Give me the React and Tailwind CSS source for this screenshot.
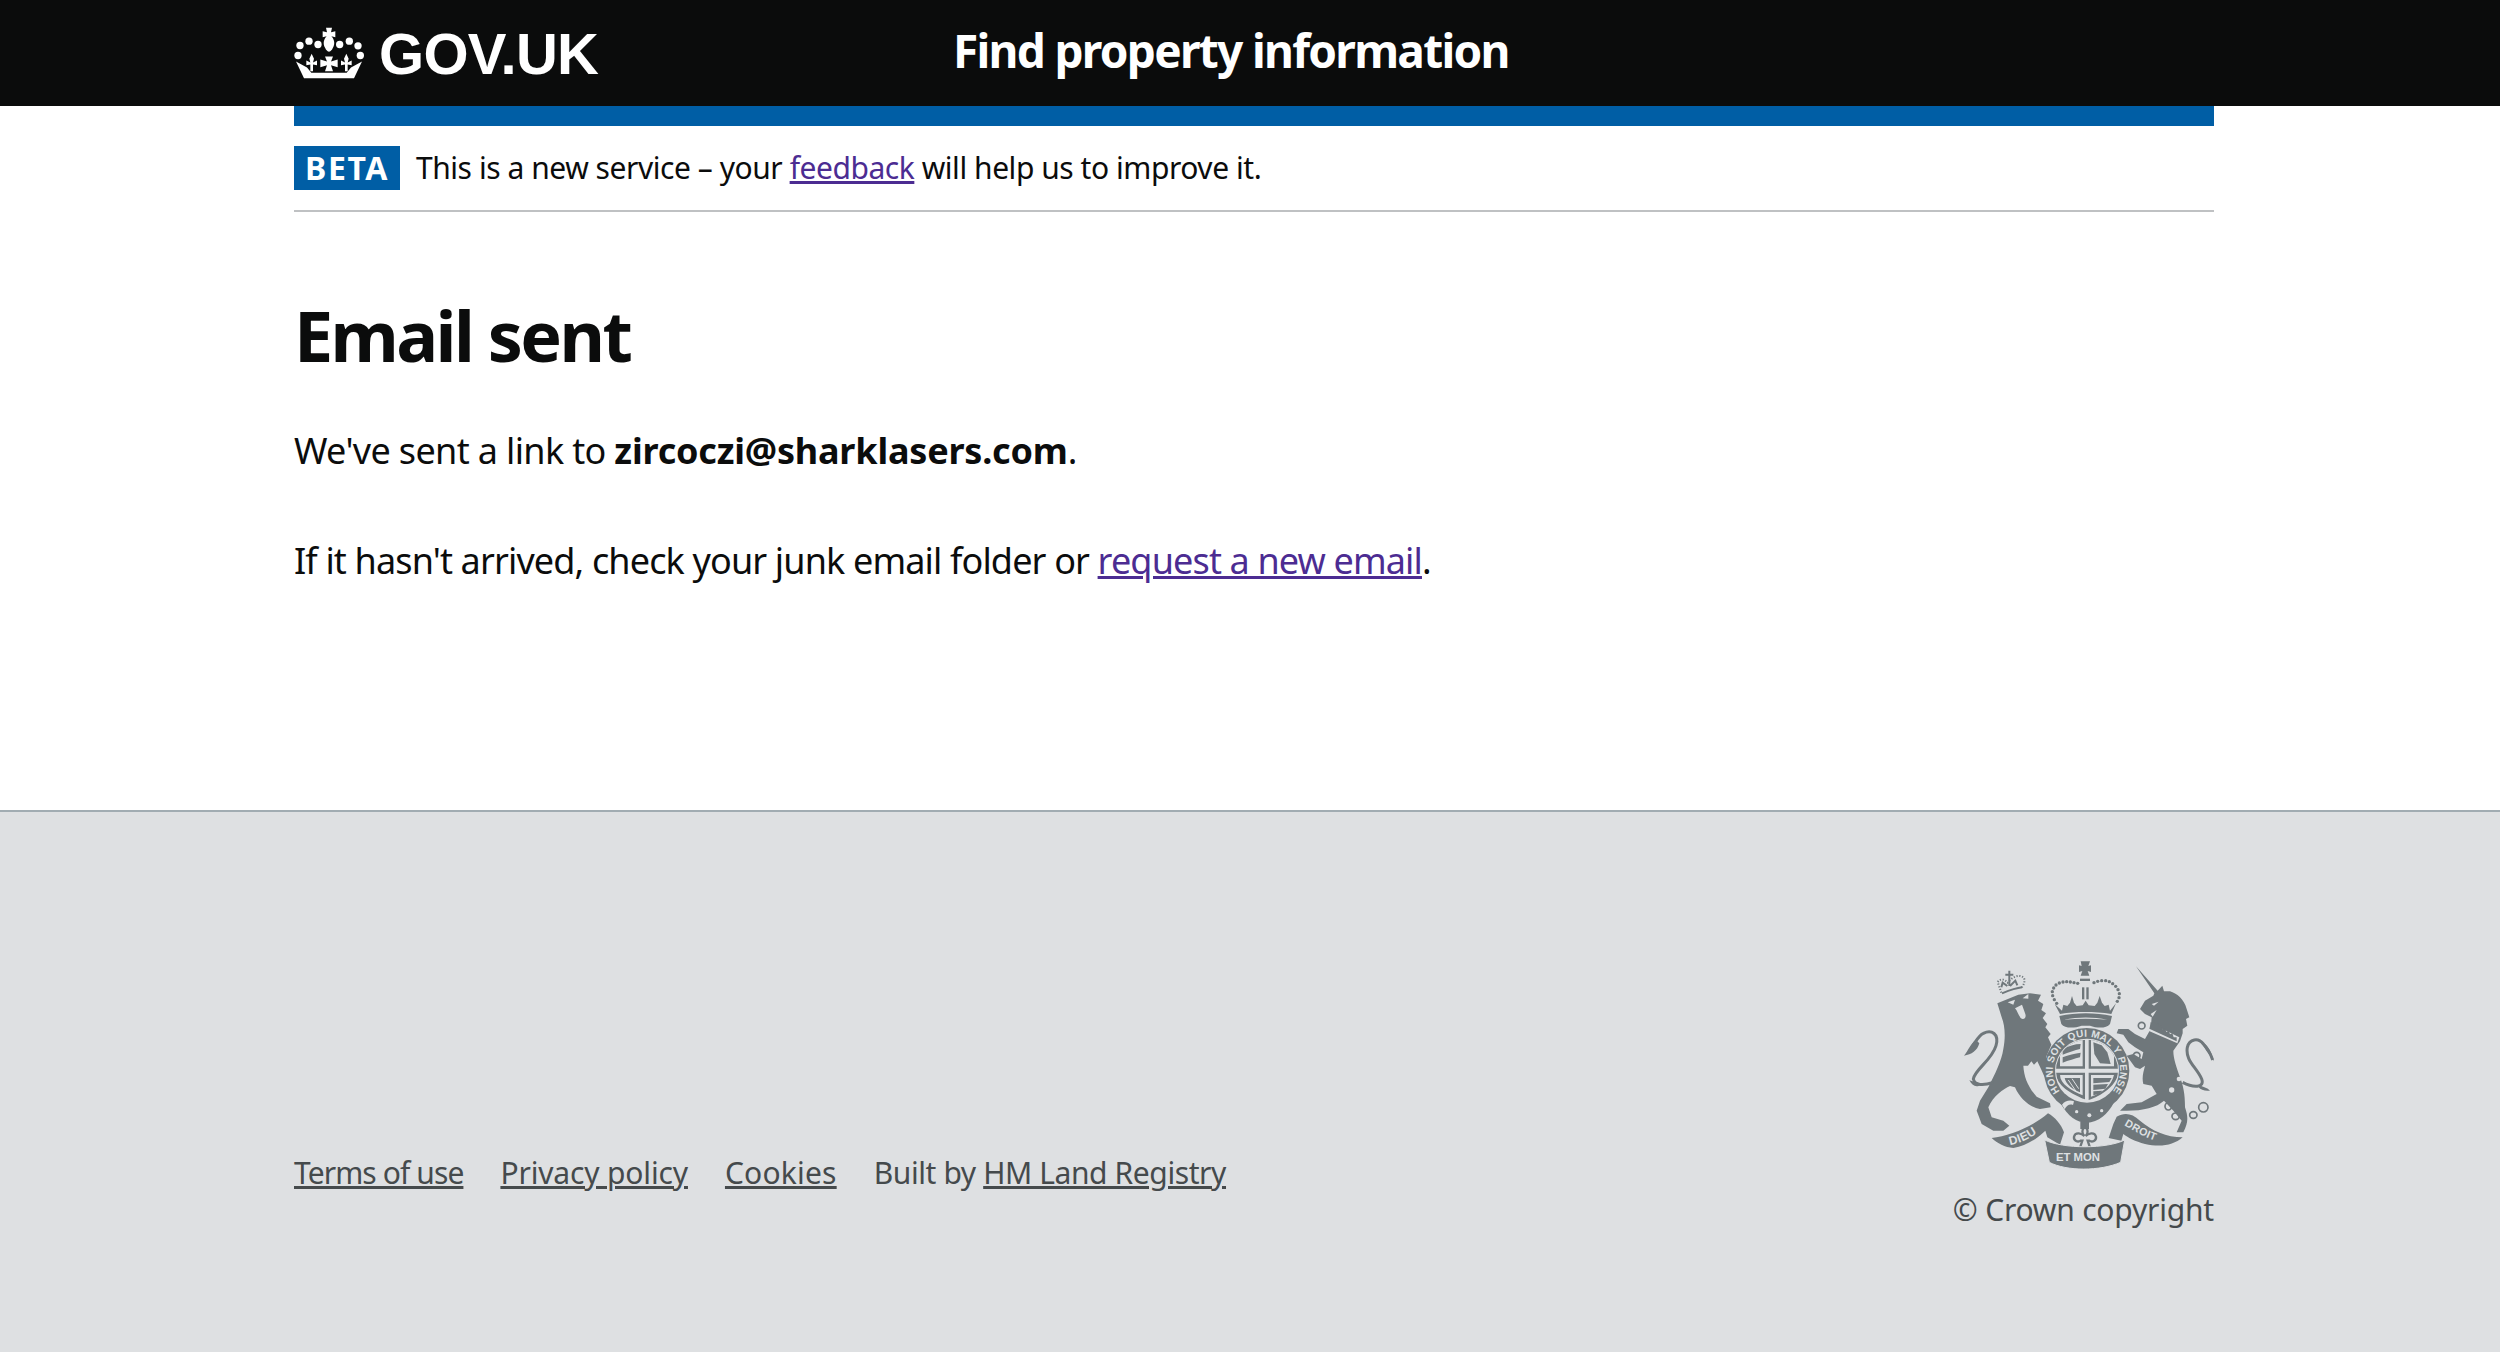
function Crown() {
  return (
    <svg width="70" height="52" viewBox="15 25 210 155" fill="#fff" aria-hidden="true">
      <path d="M111 27h18l-3 13 13-3v18l-12-3c8 8 13 22 4 36-2 5-5 8-11 11-6-3-9-6-11-11-9-14-4-28 4-36l-12 3V37l13 3z" />
      <circle cx="33" cy="80" r="11" /><circle cx="60" cy="67" r="11" /><circle cx="87" cy="77" r="11" />
      <circle cx="152" cy="77" r="11" /><circle cx="181" cy="67" r="11" /><circle cx="207" cy="81" r="11" />
      <circle cx="27" cy="110" r="11" /><circle cx="214" cy="110" r="11" />
      <path d="M45 178H195L219 128L186 146L173 162H67L54 146L21 128Z" />
      <path d="M68 105l7 15-3 11 12-6v14l-12-2v20h-8v-20l-12 2v-14l12 6-3-11z" />
      <path d="M172 105l7 15-3 11 12-6v14l-12-2v20h-8v-20l-12 2v-14l12 6-3-11z" />
      <path d="M108 113h24l-6 15 20-6v23l-20-6 6 18h-24l6-18-20 6v-23l20 6z" />
    </svg>
  );
}
function Crest() {
  const c = "#6f777b", bg = "#dee0e2";
  return (
    <svg width="254" height="215" viewBox="0 0 762 645" aria-hidden="true">
      <defs>
        <clipPath id="inner"><circle cx="381" cy="350" r="93" /></clipPath>
        <path id="garter" d="M300 412A101 101 0 1 1 458 412" />
        <path id="dieu" d="M150 573C195 565 235 540 262 510" />
        <path id="droit" d="M492 514C520 530 560 555 612 568" />
      </defs>
      <g fill={c}>
        {/* lion */}
        <path d="M112 148L175 122L210 118L243 122L234 140L250 150L244 168L258 178L248 192L262 210L256 220L272 240L264 250L274 272L258 310L266 340L288 372L276 388L255 372L243 345L232 322L222 332L214 322L204 335L190 335C192 370 205 400 230 428L270 448L272 460L240 465C210 460 180 435 165 400L150 396C130 405 100 425 85 460L95 490L130 500L148 515L130 530L100 530L65 510L50 470L60 440L85 400C105 360 125 320 130 285C137 250 135 215 125 190Z" />
        <path d="M100 385C70 395 45 395 40 375C45 345 95 320 108 275C118 240 95 225 70 238C55 245 48 262 35 280" fill="none" stroke={c} strokeWidth="9" />
        <path d="M12 305C25 290 30 270 48 258L58 268C52 290 35 302 12 305ZM28 378C40 385 55 382 62 392C50 402 35 395 28 378Z" />
        <path d="M143 145L165 137L160 152ZM188 133L205 120L205 134ZM165 163L186 152L196 180C200 192 190 200 182 192C174 182 172 170 165 163Z" fill={bg} />
        {/* lion crown */}
        <g fill="none" stroke={c} strokeWidth="4">
          <path d="M124 116L113 84C122 72 134 76 143 86C152 74 176 56 192 72C196 84 190 96 182 104" strokeDasharray="3.5 5" strokeWidth="6" />
          <path d="M126 118C146 110 168 102 186 100" strokeWidth="6" />
          <path d="M148 50V96M136 62H160M124 100L128 86L142 96M150 96L166 80L172 94" strokeWidth="6" />
        </g>
        {/* central crown */}
        <path d="M362 22h28l-5 14 8-2v20l-10-3 5 14h-26l5-14-10 3V34l8 2z" />
        <rect x="360" y="74" width="30" height="7" />
        <rect x="366" y="100" width="7" height="36" /><rect x="379" y="100" width="7" height="36" />
        <path d="M284 150L306 170L310 152L322 156L330 146L336 126L342 146L350 156L368 154L377 140L386 154L404 156L412 146L419 126L426 146L434 156L446 152L450 170L468 148L454 180C400 172 350 172 300 180Z" />
        <path d="M298 186C350 175 405 175 456 186L450 210C438 225 410 222 390 215L365 215C345 222 315 225 304 210Z" />
        <path d="M312 197C355 188 400 188 442 197C400 193 355 193 312 197Z" fill={bg} />
        {[[278,125],[277,113],[281,102],[288,93],[298,87],[309,84],[320,83],[331,84],[342,86],[353,88],[402,86],[413,82],[425,80],[437,80],[448,83],[458,89],[467,97],[474,107],[478,119],[477,131],[472,142],[283,137],[290,148]].map(([x, y], i) => <circle key={i} cx={x} cy={y} r="5" />)}
        {/* garter */}
        <circle cx="380" cy="350" r="128" />
        <path d="M300 445C325 490 350 505 380 507C415 505 445 480 462 445L440 420L320 420Z" />
        <circle cx="381" cy="350" r="96" fill={bg} />
        <g clipPath="url(#inner)">
          <path d="M288 250H375V344H288ZM386 250H475V344H386ZM288 356H375V436C335 420 288 395 288 356ZM386 356H475C470 395 425 425 386 438Z" />
          <path d="M300 256H368V337H300ZM393 256H462V337H393ZM300 363H368V424C335 410 300 390 300 363ZM393 363H462C455 395 425 418 393 428Z" fill={bg} />
          <path d="M308 285C325 276 345 270 362 270L360 285C345 288 325 296 308 302ZM308 310C325 303 345 298 362 296L360 310C345 314 325 320 308 326ZM400 265L425 274L442 295L452 330L420 328L403 300ZM400 372H455L448 384L400 388ZM400 392L444 390L436 404L400 408ZM400 412L428 410L416 420L400 424ZM314 372H360V415C340 408 318 392 314 372Z" />
          <path d="M325 378L348 412M336 374L356 404" stroke={bg} strokeWidth="3" fill="none" />
        </g>
        <g fill={bg}>
          <circle cx="350" cy="473" r="5" /><circle cx="388" cy="484" r="6" /><circle cx="425" cy="470" r="5" />
          <path d="M306 452C315 440 330 437 342 442L339 453C328 449 320 455 314 466Z" />
        </g>
        {/* fleur */}
        <rect x="361" y="503" width="26" height="22" />
        <path d="M375 518C386 528 384 540 377 546C384 538 404 532 408 548C410 560 396 566 388 560L383 560L389 578L375 586L361 578L367 560L362 560C354 566 340 560 342 548C346 532 366 538 373 546C366 540 364 528 375 518Z" fill="none" stroke={c} strokeWidth="7" />
        {/* ribbon */}
        <path d="M95 552C150 548 230 510 264 478C285 490 303 510 312 535L300 572L262 550L256 530C225 560 195 575 160 582C135 580 112 568 95 552Z" />
        <path d="M254 558C310 585 440 585 494 558L482 625C420 652 320 652 268 625Z" stroke={bg} strokeWidth="3" />
        <path d="M460 510L470 488C495 475 515 478 540 500C575 530 620 550 668 550C640 575 600 580 555 570C525 562 505 552 490 540L484 560L446 552Z" />
        {/* unicorn */}
        <path d="M528 37L593 110L607 95L612 112L630 112C650 118 672 135 680 165L688 190L678 195L682 215L668 225L668 238L660 262L640 290C640 315 650 340 660 370C670 395 675 420 675 460C685 490 685 505 670 535L650 535L665 500L640 470L612 440C590 460 550 470 500 470L480 470L500 450L545 445L590 420L575 395L550 390C545 370 550 355 555 335L540 345L525 340L500 305L520 300L545 315L550 295L525 280L505 265L490 242L470 238L475 225L505 225L525 240L555 255L572 225L575 190L555 180L540 165L555 140L580 125L583 118Z" />
        <path d="M572 180L590 168L578 188ZM575 150L596 143L582 155Z" fill={bg} />
        <path d="M566 205L658 250L652 268L560 228Z" fill={bg} />
        <path d="M570 216L572 204L578 208L582 200L587 212L593 206L597 218L604 214L608 226L615 222L619 234L626 230L630 241L637 238L641 250L650 250L650 262L568 224Z" />
        <path d="M668 385C700 402 735 402 725 375C710 340 675 320 682 280C688 255 715 250 730 270C745 285 752 300 758 318" fill="none" stroke={c} strokeWidth="9" />
        <path d="M722 395C732 400 742 400 750 410C735 412 722 408 716 400ZM718 258C738 268 752 285 762 322L740 292Z" />
        <g fill="none" stroke={c} strokeWidth="5">
          <circle cx="545" cy="215" r="10" /><circle cx="530" cy="305" r="10" />
          <ellipse cx="625" cy="457" rx="10" ry="11" /><ellipse cx="647" cy="487" rx="11" ry="10" />
          <ellipse cx="700" cy="483" rx="11" ry="10" /><ellipse cx="730" cy="460" rx="14" ry="14" />
        </g>
        <g fill={bg}><circle cx="665" cy="330" r="10" /><circle cx="657" cy="375" r="7" /><circle cx="635" cy="408" r="8" /></g>
      </g>
      <g fill={bg} fontFamily="'Liberation Sans', sans-serif" fontWeight="700">
        <text fontSize="30"><textPath href="#garter" textLength="452" lengthAdjust="spacing">HONI SOIT QUI MAL Y PENSE</textPath></text>
        <text fontSize="36" letterSpacing="1"><textPath href="#dieu">DIEU</textPath></text>
        <text fontSize="32" letterSpacing="1"><textPath href="#droit">DROIT</textPath></text>
        <text x="288" y="622" fontSize="34">ET MON</text>
      </g>
    </svg>
  );
}
export default function App() {
  return (
    <div className="min-h-screen flex flex-col bg-white text-[#0b0c0c] font-['Noto_Sans',sans-serif]">
      <header className="h-[106px] bg-[#0b0c0c] shrink-0">
        <div className="w-[1920px] ml-[294px] h-full flex items-center">
          <a className="w-[659px] flex items-center gap-[15px] text-white text-[58px] font-bold tracking-[-0.7px] font-['Liberation_Sans',sans-serif]">
            <Crown />GOV.UK
          </a>
          <span className="text-white text-[46px] font-bold tracking-[-1.7px] -mt-[5px]">Find property information</span>
        </div>
      </header>
      <div className="w-[1920px] ml-[294px]">
        <div className="h-5 bg-[#005ea5]" />
        <div className="h-[86px] flex items-center border-b-2 border-[#bfc1c3]">
          <strong className="w-[106px] h-11 bg-[#005ea5] text-white text-[32px] font-bold tracking-[1.6px] flex items-center justify-center">BETA</strong>
          <p className="ml-4 -mt-[2px] text-[30px] tracking-[-0.45px]">This is a new service – your <a className="underline text-[#4c2c92]">feedback</a> will help us to improve it.</p>
        </div>
        <main className="h-[598px] pt-[78px]">
          <h1 className="text-[70px] leading-[90px] font-bold tracking-[-2.6px]">Email sent</h1>
          <p className="mt-[46px] text-[36px] leading-[50px] tracking-[-0.65px]">We've sent a link to <strong className="font-bold tracking-[-0.2px]">zircoczi@sharklasers.com</strong>.</p>
          <p className="mt-[60px] text-[36px] leading-[50px] tracking-[-0.85px]">If it hasn't arrived, check your junk email folder or <a className="underline text-[#4c2c92]">request a new email</a>.</p>
        </main>
      </div>
      <footer className="flex-1 bg-[#dee0e2] border-t-2 border-[#a1acb2] text-[#454a4c]">
        <div className="w-[1920px] ml-[294px] pt-[142px] flex justify-between items-end text-[30px]">
          <ul className="flex gap-[37px] pb-[37px] leading-[40px]">
            <li><a className="underline tracking-[-0.9px]">Terms of use</a></li>
            <li><a className="underline tracking-[-0.15px]">Privacy policy</a></li>
            <li><a className="underline tracking-[0.2px]">Cookies</a></li>
            <li className="tracking-[-0.4px]">Built by <a className="underline">HM Land Registry</a></li>
          </ul>
          <div className="flex flex-col items-end gap-[21px]">
            <Crest />
            <span className="leading-[40px] tracking-[-0.2px]">© Crown copyright</span>
          </div>
        </div>
      </footer>
    </div>
  );
}
